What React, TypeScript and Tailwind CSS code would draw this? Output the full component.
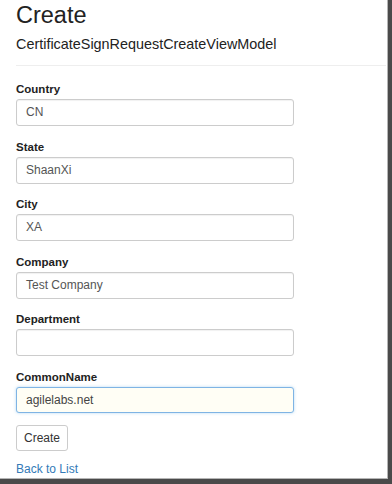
const fields = [
  { label: 'Country', value: 'CN' },
  { label: 'State', value: 'ShaanXi' },
  { label: 'City', value: 'XA' },
  { label: 'Company', value: 'Test Company' },
  { label: 'Department', value: '' },
  { label: 'CommonName', value: 'agilelabs.net', focused: true },
];

export default function App() {
  return (
    <div className="w-[392px] h-[484px] bg-[#4a4a4a] overflow-hidden font-['Liberation_Sans',Arial,sans-serif] text-[#333]">
      <div className="w-[388px] h-[479px] bg-white border-r border-b border-[#b5b5b5]">
        <div className="pl-4 pr-[1px]">
          <h2 className="text-[23.5px] leading-[28px] pt-[1px] font-normal text-[#222]">Create</h2>
          <h4 className="text-[14.4px] leading-[18px] mt-[6px] text-[#222]">CertificateSignRequestCreateViewModel</h4>
          <hr className="mt-[12px] border-t border-[#eee]" />

          <form className="mt-[16px]">
            {fields.map((f) => (
              <div key={f.label} className="mb-[13.6px]">
                <label className="block text-[11.5px] leading-[15px] font-bold mb-[2px] text-[#222]">{f.label}</label>
                <div
                  className={
                    f.focused
                      ? 'w-[278px] h-[26px] rounded-[3px] border border-[#7fb4e4] bg-[#fffef5] shadow-[0_0_3px_rgba(102,175,233,0.5)] px-[9px] text-[12px] leading-[24px] text-[#444]'
                      : 'w-[278px] h-[27px] rounded-[3px] border border-[#ccc] bg-white shadow-[inset_0_1px_1px_rgba(0,0,0,0.06)] px-[9px] text-[12px] leading-[25px] text-[#555]'
                  }
                >
                  {f.value}
                </div>
              </div>
            ))}
            <button
              type="button"
              className="block -mt-[2px] h-[26px] px-[7px] rounded-[3px] border border-[#ccc] bg-white text-[12px] text-[#333]"
            >
              Create
            </button>
          </form>
          <a href="#" className="block mt-[11px] text-[12px] leading-[15px] text-[#337ab7]">
            Back to List
          </a>
        </div>
      </div>
    </div>
  );
}
